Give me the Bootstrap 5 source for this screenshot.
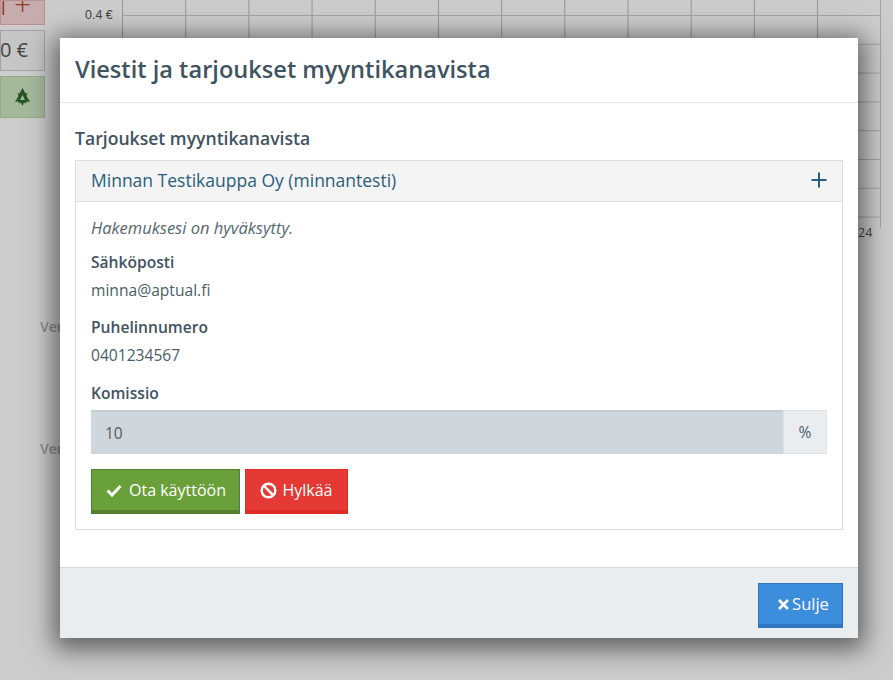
<!DOCTYPE html>
<html lang="fi"><head><meta charset="utf-8"><title>Viestit</title>
<link href="https://cdn.jsdelivr.net/npm/bootstrap@5.3.0/dist/css/bootstrap.min.css" rel="stylesheet">
<style>
html,body{height:100%;overflow:hidden}
body{font-family:"Open Sans","Noto Sans",sans-serif;background:#fff;color:#4a5d69;font-size:16px}
.pagebg{height:680px;width:893px;overflow:hidden;position:relative;background:#fff}
.sidecol{width:45px;flex:none}
.sb1{height:25px;background:#f8d7d7;border:1px solid #e9b5b5;color:#b5482f;font-size:30px;font-weight:300;line-height:6px;padding-right:13px;overflow:hidden}
.sb1-l{font-size:18px;font-weight:400;line-height:14px}
.sb2{height:41px;margin-top:5px;border:1px solid #ccc;background:#f8f8f8;font-size:20px;line-height:38px;white-space:nowrap;overflow:hidden;padding-right:16px;color:#555}
.sb3{height:42px;margin-top:5px;background:#cfe6c4;border:1px solid #b9d6ab}
.chartarea{position:absolute;left:122px;top:0;width:759px;height:228px;
 background-image:linear-gradient(#ccc 1px,transparent 1px),linear-gradient(90deg,#bbb 1px,transparent 1px);
 background-size:100% 28.8px,63.2px 100%;background-position:0 15px,0 0;border-right:1px solid #ccc}
.ylab{position:absolute;left:85px;top:8px;font:12.5px "Liberation Sans",sans-serif;color:#555}
.xlab{position:absolute;left:858px;top:224px;font:12.5px "Open Sans",sans-serif;color:#555}
.ver{position:absolute;left:40px;font-size:14px;color:#a8b6bd;font-weight:600}
.ver-a{top:316px}
.ver-b{top:438px}
.dimmer{position:absolute;inset:0;background:rgba(0,0,0,.2)}
.dlg{position:absolute;left:60px;top:38px;width:798px;height:600px;background:#fff;box-shadow:0 5px 24px 6px rgba(0,0,0,.55);display:flex;flex-direction:column}
.dlg-head{height:65px;border-bottom:1px solid #e5e5e5;padding:14px 15px 0}
.dlg-head h4{font-size:23.600px;font-weight:600;line-height:35px;margin:0;color:#3f5361}
.dlg-body{flex:1;padding:23px 15px 0}
.dlg-body h5{font-size:17.600px;font-weight:600;margin:0 0 10px;line-height:24px;color:#3f5361}
.offer{border:1px solid #dcdcdc;height:370px}
.offer-head{height:41px;background:#f4f4f4;border-bottom:1px solid #dcdcdc;padding:0 15px 2px;color:#2b5d7d;font-size:17.500px}
.offer-body{padding:15px 15px 0;font-size:15.600px}
.offer-body em{display:block;line-height:22px;margin-bottom:12px;font-size:16.500px;color:#55666f}
.fld-l{font-weight:600;line-height:22px;margin-bottom:6px;color:#3f5361}
.fld-v{line-height:22px;margin-bottom:15px}
.komi{margin-top:16px}
.pct{height:44px;margin-top:6px;display:flex}
.pct-in{flex:1;background:#cfd7dd;border:0;border-top:2px solid #c3ccd1;padding:0 14px;color:#5a5a55;font:15.500px "Open Sans",sans-serif;min-width:0}
.pct-ad{width:44px;background:#e9edf0;border:1px solid #dfe3e6;text-align:center;line-height:42px}
.actbtn{height:45px;border-radius:0;color:#fff;font-size:16px;display:inline-flex;align-items:center;justify-content:center;gap:7px;padding:0;border-width:1px 1px 4px;border-style:solid}
.actbtn:hover{color:#fff}
.okb{width:149px;background:#69a03a;border-color:#55802f;padding-left:1px}
.nob{width:103px;background:#e53935;border-color:#e02c27;gap:5px}
.clb{width:85px;background:#3c8ddb;border-color:#2f75c0;gap:3px;padding-left:6px;font-size:16.500px}
.btnrow{gap:5px;margin-top:15px}
.dlg-foot{height:71px;background:#e9edf0;border-top:1px solid #d8d8d8;padding:15px 15px 0;display:flex;justify-content:flex-end}
</style></head><body>
<div class="pagebg">
 <div class="sidecol">
  <div class="sb1 d-flex justify-content-between"><span class="sb1-l">l</span><span>+</span></div>
  <div class="sb2 d-flex justify-content-end">00 €</div>
  <div class="sb3 d-flex align-items-center justify-content-center">
   <svg width="17" height="18" viewBox="0 0 17 18"><path fill-rule="evenodd" d="M8.500 0l3 5.500 2-.5-1 3 3.500 6-3.500-.5-.5 2-2-1-1.500 3.500-1.500-3.500-2 1-.5-2-3.500.5 3.500-6-1-3 2 .5zM8.500 7L6 12h5z" fill="#2f6b2a"/></svg>
  </div>
 </div>
 <div class="chartarea"></div>
 <div class="ylab">0.4 €</div>
 <div class="xlab">24</div>
 <div class="ver ver-a">Ver</div>
 <div class="ver ver-b">Ver</div>
 <div class="dimmer"></div>
 <div class="dlg" role="dialog">
  <div class="dlg-head"><h4>Viestit ja tarjoukset myyntikanavista</h4></div>
  <div class="dlg-body">
   <h5>Tarjoukset myyntikanavista</h5>
   <div class="offer">
    <div class="offer-head d-flex justify-content-between align-items-center"><span>Minnan Testikauppa Oy (minnantesti)</span>
     <svg width="16" height="16" viewBox="0 0 16 16"><path d="M8 0.500v15M0.500 8h15" stroke="#2b5d7d" stroke-width="2"/></svg></div>
    <div class="offer-body">
     <em>Hakemuksesi on hyväksytty.</em>
     <div class="fld-l">Sähköposti</div>
     <div class="fld-v">minna@aptual.fi</div>
     <div class="fld-l">Puhelinnumero</div>
     <div class="fld-v">0401234567</div>
     <div class="fld-l komi">Komissio</div>
     <div class="pct"><input class="pct-in" value="10" readonly><div class="pct-ad">%</div></div>
     <div class="d-flex btnrow">
      <button class="btn actbtn okb"><svg width="16" height="13" viewBox="0 0 16 13"><path d="M1.500 6.500l4.500 4.500L14.500 2" fill="none" stroke="#fff" stroke-width="3"/></svg>Ota käyttöön</button>
      <button class="btn actbtn nob"><svg width="17" height="17" viewBox="0 0 17 17"><circle cx="8.500" cy="8.500" r="6.800" fill="none" stroke="#fff" stroke-width="2.400"/><path d="M3.700 3.700l9.600 9.600" stroke="#fff" stroke-width="2.400"/></svg>Hylkää</button>
     </div>
    </div>
   </div>
  </div>
  <div class="dlg-foot"><button class="btn actbtn clb"><svg width="11" height="11" viewBox="0 0 11 11"><path d="M1 1l9 9M10 1l-9 9" stroke="#fff" stroke-width="2.600"/></svg>Sulje</button></div>
 </div>
</div>
<script src="https://cdn.jsdelivr.net/npm/bootstrap@5.3.0/dist/js/bootstrap.bundle.min.js"></script>
</body></html>
